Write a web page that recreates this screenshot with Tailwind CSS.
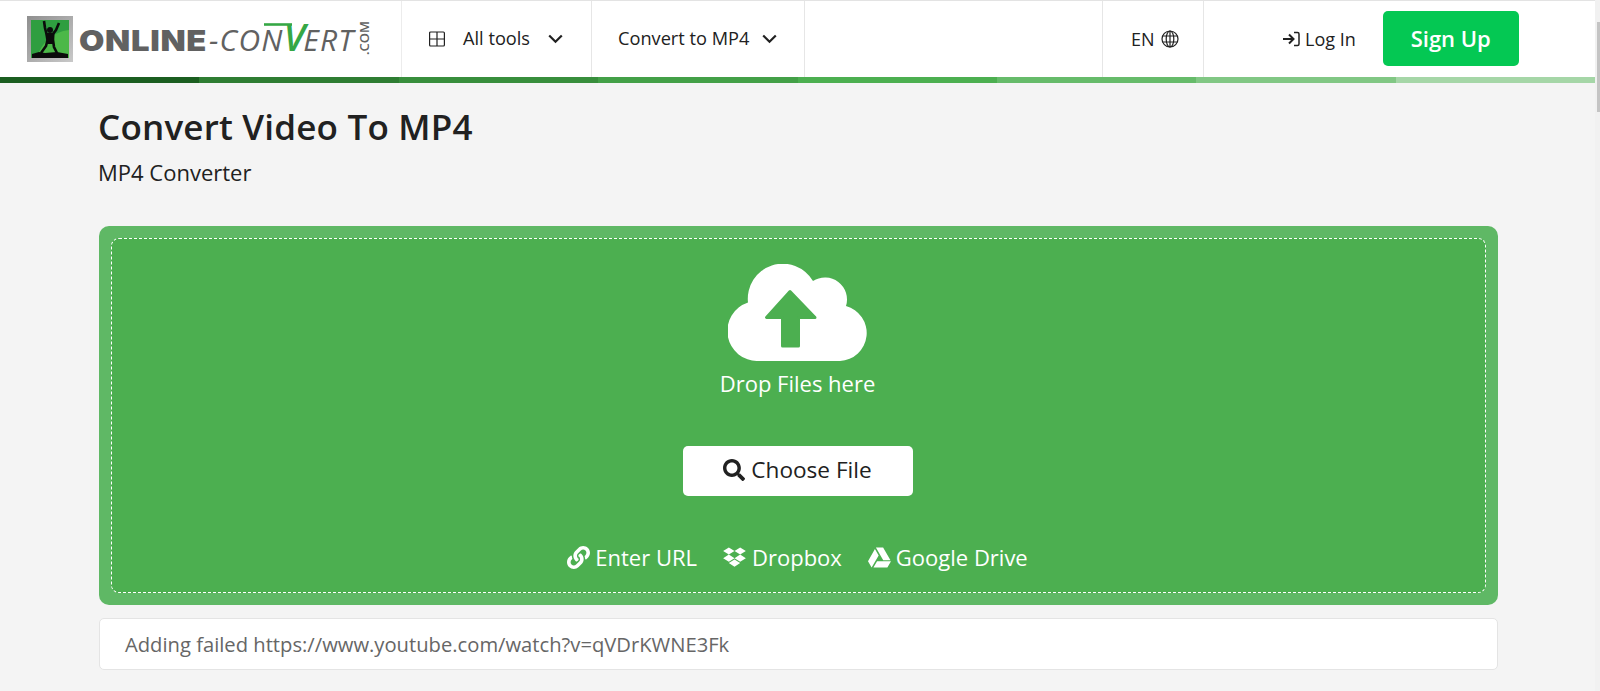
<!DOCTYPE html>
<html lang="en">
<head>
    <meta charset="UTF-8">
    <meta name="viewport" content="width=device-width, initial-scale=1.0">
    <title>Convert Video To MP4</title>
    <script src="https://cdn.jsdelivr.net/npm/@tailwindcss/browser@4"></script>
</head>
<body class="h-[691px] overflow-hidden bg-[#f4f4f4] font-['Open_Sans',sans-serif] text-[#212121]">

    <div class="flex h-[691px]">
        <div class="w-[1595px]">
            <!-- header -->
            <header class="flex h-[77px] border-t border-[#e3e3e3] bg-white">
                <a class="flex w-[402px] border-r border-[#ececec] pl-[27px] pt-[15px]">
                    <div class="flex h-[46px] w-[46px] shrink-0 items-center justify-center bg-gradient-to-br from-[#8f8f8f] to-[#c9c9c9]">
                        <svg class="h-[38px] w-[38px]" viewBox="0 0 38 38">
                            <rect width="38" height="38" fill="#2f9e40"/>
                            <path d="M38 10 C22 12 10 22 6 38 H38Z" fill="#4cb848"/>
                            <path d="M13 1L14 8L15.500 14L16.500 20L15 26L10 33M28 3L25 10L22 14L22 20L23 27L26 33" fill="none" stroke="#0b0b0b" stroke-width="2.600"/>
                            <path d="M14.500 13L23.500 13L22.500 24L16.500 24Z" fill="#0b0b0b"/>
                            <circle cx="19" cy="10" r="3" fill="#0b0b0b"/>
                            <path d="M1 38V34L8 32L14 33L26 32L37 34V38Z" fill="#0b0b0b"/>
                        </svg>
                    </div>
                    <div class="relative ml-[6px] flex h-[46px] items-center text-[30px] leading-none text-[#616161]">
                        <div class="mb-[7px] flex items-baseline">
                            <span class="inline-block w-[124px] origin-left scale-x-[1.130] font-['Inter',sans-serif] text-[29px] font-black tracking-[0.600px]">ONLINE</span>
                            <span class="ml-[6px] font-medium italic tracking-[1.200px]">-CON</span>
                            <span class="-mr-[2px] text-[38px] font-semibold italic text-[#35a745]">V</span>
                            <span class="font-medium italic tracking-[1.200px]">ERT</span>
                        </div>
                        <svg class="absolute left-[184px] top-[7px] h-[12px] w-[30px]" viewBox="0 0 30 12">
                            <path d="M1 1.500 H29" fill="none" stroke="#35a745" stroke-width="2.600"/>
                        </svg>
                        <span class="mb-[2px] ml-[4px] rotate-180 text-[13px] font-semibold leading-none [writing-mode:vertical-rl]">.COM</span>
                    </div>
                </a>
                <nav class="flex">
                    <a class="flex w-[190px] items-center border-r border-[#e6e6e6] pl-[27px] text-[18.200px]">
                        <svg class="h-4 w-4" viewBox="0 0 16 16" fill="none" stroke="#212121" stroke-width="1.200"><rect x="0.600" y="1" width="14.800" height="14" rx="1"/><path d="M8 1V15M0.600 8H15.400"/></svg>
                        <span class="ml-[18px]">All tools</span>
                        <svg class="ml-[18px] h-[10px] w-[15px]" viewBox="0 0 15 10" fill="none" stroke="#212121" stroke-width="2.200"><path d="M1.200 1.500L7.500 7.800L13.800 1.500"/></svg>
                    </a>
                    <a class="flex w-[213px] items-center border-r border-[#e6e6e6] pl-[26px] text-[18.200px]">
                        <span>Convert to MP4</span>
                        <svg class="ml-[13px] h-[10px] w-[15px]" viewBox="0 0 15 10" fill="none" stroke="#212121" stroke-width="2.200"><path d="M1.200 1.500L7.500 7.800L13.800 1.500"/></svg>
                    </a>
                </nav>
                <div class="flex-1 border-r border-[#e6e6e6]"></div>
                <a class="flex w-[101px] items-center border-r border-[#e6e6e6] pl-[28px] text-[18px]">
                    <span>EN</span>
                    <svg class="ml-[6px] h-[18px] w-[18px]" viewBox="0 0 18 18" fill="none" stroke="#212121" stroke-width="1.200"><circle cx="9" cy="9" r="8"/><ellipse cx="9" cy="9" rx="3.800" ry="8"/><path d="M1.600 6H16.400M1.600 12H16.400M9 1V17"/></svg>
                </a>
                <div class="flex w-[391px] items-center pl-[78px]">
                    <svg class="h-[16px] w-[18px]" viewBox="0 0 18 16" fill="none" stroke="#212121" stroke-width="2"><path d="M1 8H10.500M7 3.500L11.500 8L7 12.500"/><path d="M12 1.500H15.500C16.300 1.500 17 2.200 17 3V13C17 13.800 16.300 14.500 15.500 14.500H12" stroke-width="1.500"/></svg>
                    <span class="ml-[5px] text-[18px]">Log In</span>
                    <a class="mb-[1px] ml-[27px] flex h-[55px] w-[136px] shrink-0 items-center justify-center rounded-[5px] bg-[#04c853] text-[22px] font-semibold text-white">Sign Up</a>
                </div>
            </header>

            <!-- progress strip -->
            <div class="grid h-[6px] grid-cols-8">
                <div class="bg-[#1b5e20]"></div>
                <div class="bg-[#2e7d32]"></div>
                <div class="bg-[#388e3c]"></div>
                <div class="bg-[#43a047]"></div>
                <div class="bg-[#4caf50]"></div>
                <div class="bg-[#66bb6a]"></div>
                <div class="bg-[#81c784]"></div>
                <div class="bg-[#a5d6a7]"></div>
            </div>

            <main class="ml-[99px] w-[1399px] pt-[20px]">
                <h1 class="-ml-[1px] text-[35px] font-semibold leading-[48px] tracking-[0.200px]">Convert Video To MP4</h1>
                <p class="-ml-[1px] mt-[7px] text-[22px] leading-[28px]">MP4 Converter</p>

                <!-- upload box -->
                <section class="mt-[40px] h-[379px] rounded-[10px] bg-[#5fb865] p-[12px]">
                    <div class="flex h-[355px] flex-col items-center rounded-[8px] border border-dashed border-white bg-[#4caf50] pr-[2px] text-white">
                        <svg class="mt-[25px] h-[97px] w-[139px]" viewBox="0 0 139 97">
                            <path d="M30 97A30 30 0 0 1 20 38.500A35 35 0 0 1 85 17A22 22 0 0 1 118 42A28 28 0 0 1 112 97Z" fill="#fff"/>
                            <path d="M62 27.500L38.500 53.500H54.500V82H70.500V53.500H87Z" fill="#4caf50" stroke="#4caf50" stroke-width="3" stroke-linejoin="round"/>
                        </svg>
                        <p class="mt-[7px] text-[22px] leading-[30px]">Drop Files here</p>
                        <button class="mt-[48px] flex h-[50px] w-[230px] items-center justify-center rounded-[5px] bg-white pb-[2px] text-[22.600px] font-medium text-[#212121]">
                            <svg class="mr-[6px] h-[22px] w-[22px]" viewBox="0 0 512 512" fill="#212121"><path d="M505 442.700L405.300 343c-4.500-4.500-10.600-7-17-7H372c27.600-35.300 44-79.700 44-128C416 93.100 322.900 0 208 0S0 93.100 0 208s93.100 208 208 208c48.300 0 92.700-16.400 128-44v16.300c0 6.400 2.500 12.500 7 17l99.700 99.700c9.400 9.400 24.600 9.400 33.900 0l28.300-28.300c9.400-9.400 9.400-24.600.1-34zM208 336c-70.700 0-128-57.200-128-128 0-70.700 57.200-128 128-128 70.700 0 128 57.200 128 128 0 70.700-57.200 128-128 128z"/></svg>
                            Choose File
                        </button>
                        <div class="mt-[46px] flex items-center gap-[26px] text-[22px] leading-[30px]">
                            <a class="flex items-center gap-[5px]">
                                <svg class="h-[23px] w-[23px]" viewBox="0 0 512 512" fill="#fff"><path d="M326.612 185.391c59.747 59.809 58.927 155.698.36 214.590-.11.12-.24.25-.36.37l-67.200 67.200c-59.270 59.270-155.699 59.262-214.960 0-59.270-59.260-59.270-155.700 0-214.960l37.106-37.106c9.840-9.840 26.786-3.300 27.294 10.606.648 17.722 3.826 35.527 9.690 52.721 1.986 5.822.567 12.262-3.783 16.612l-13.087 13.087c-28.026 28.026-28.905 73.660-1.155 101.960 28.024 28.579 74.086 28.749 102.325.51l67.200-67.190c28.191-28.191 28.073-73.757 0-101.830-3.701-3.694-7.429-6.564-10.341-8.569a16.037 16.037 0 0 1-6.947-12.606c-.396-10.567 3.348-21.456 11.698-29.806l21.054-21.055c5.521-5.521 14.182-6.199 20.584-1.731a152.482 152.482 0 0 1 20.522 17.197zM467.547 44.449c-59.261-59.262-155.690-59.270-214.960 0l-67.200 67.200c-.12.12-.25.25-.36.37-58.566 58.892-59.387 154.781.36 214.590a152.454 152.454 0 0 0 20.521 17.196c6.402 4.468 15.064 3.789 20.584-1.731l21.054-21.055c8.350-8.350 12.094-19.239 11.698-29.806a16.037 16.037 0 0 0-6.947-12.606c-2.912-2.005-6.640-4.875-10.341-8.569-28.073-28.073-28.191-73.639 0-101.830l67.200-67.190c28.239-28.239 74.300-28.069 102.325.51 27.750 28.300 26.872 73.934-1.155 101.960l-13.087 13.087c-4.350 4.350-5.769 10.790-3.783 16.612 5.864 17.194 9.042 34.999 9.690 52.721.509 13.906 17.454 20.446 27.294 10.606l37.106-37.106c59.271-59.259 59.271-155.699.001-214.959z"/></svg>
                                Enter URL
                            </a>
                            <a class="flex items-center gap-[6px]">
                                <svg class="h-[22px] w-[23px]" viewBox="0 0 528 512" fill="#fff"><path d="M264.400 116.300l-132 84.300 132 84.300-132 84.300L0 284.100l132.300-84.300L0 116.300 132.300 32l132.100 84.300zM131.600 395.700l132-84.300 132 84.300-132 84.300-132-84.300zm132.800-111.600l132-84.300-132-83.600L395.700 32 528 116.300l-132.300 84.300L528 284.800l-132.300 84.300-131.300-85z"/></svg>
                                Dropbox
                            </a>
                            <a class="flex items-center gap-[5px]">
                                <svg class="h-[23px] w-[23px]" viewBox="0 0 512 512" fill="#fff"><path d="M339 314.900L175.400 32h161.200l163.600 282.900H339zm-137.500 23.600L120.900 480h310.500L512 338.500H201.500zM154.100 67.400L0 338.500 80.600 480 237 208.800 154.100 67.400z"/></svg>
                                Google Drive
                            </a>
                        </div>
                    </div>
                </section>

                <!-- message -->
                <div class="mt-[13px] flex h-[52px] items-center rounded-[5px] border border-[#e4e4e4] bg-white pl-[25px] text-[20.200px] text-[#666]">
                    Adding failed https://www.youtube.com/watch?v=qVDrKWNE3Fk
                </div>
            </main>
        </div>

        <!-- scrollbar -->
        <div class="w-[5px] bg-[#f1f1f1]">
            <div class="ml-[2px] mt-[22px] h-[90px] bg-[#c4c4c4]"></div>
        </div>
    </div>

</body>
</html>
